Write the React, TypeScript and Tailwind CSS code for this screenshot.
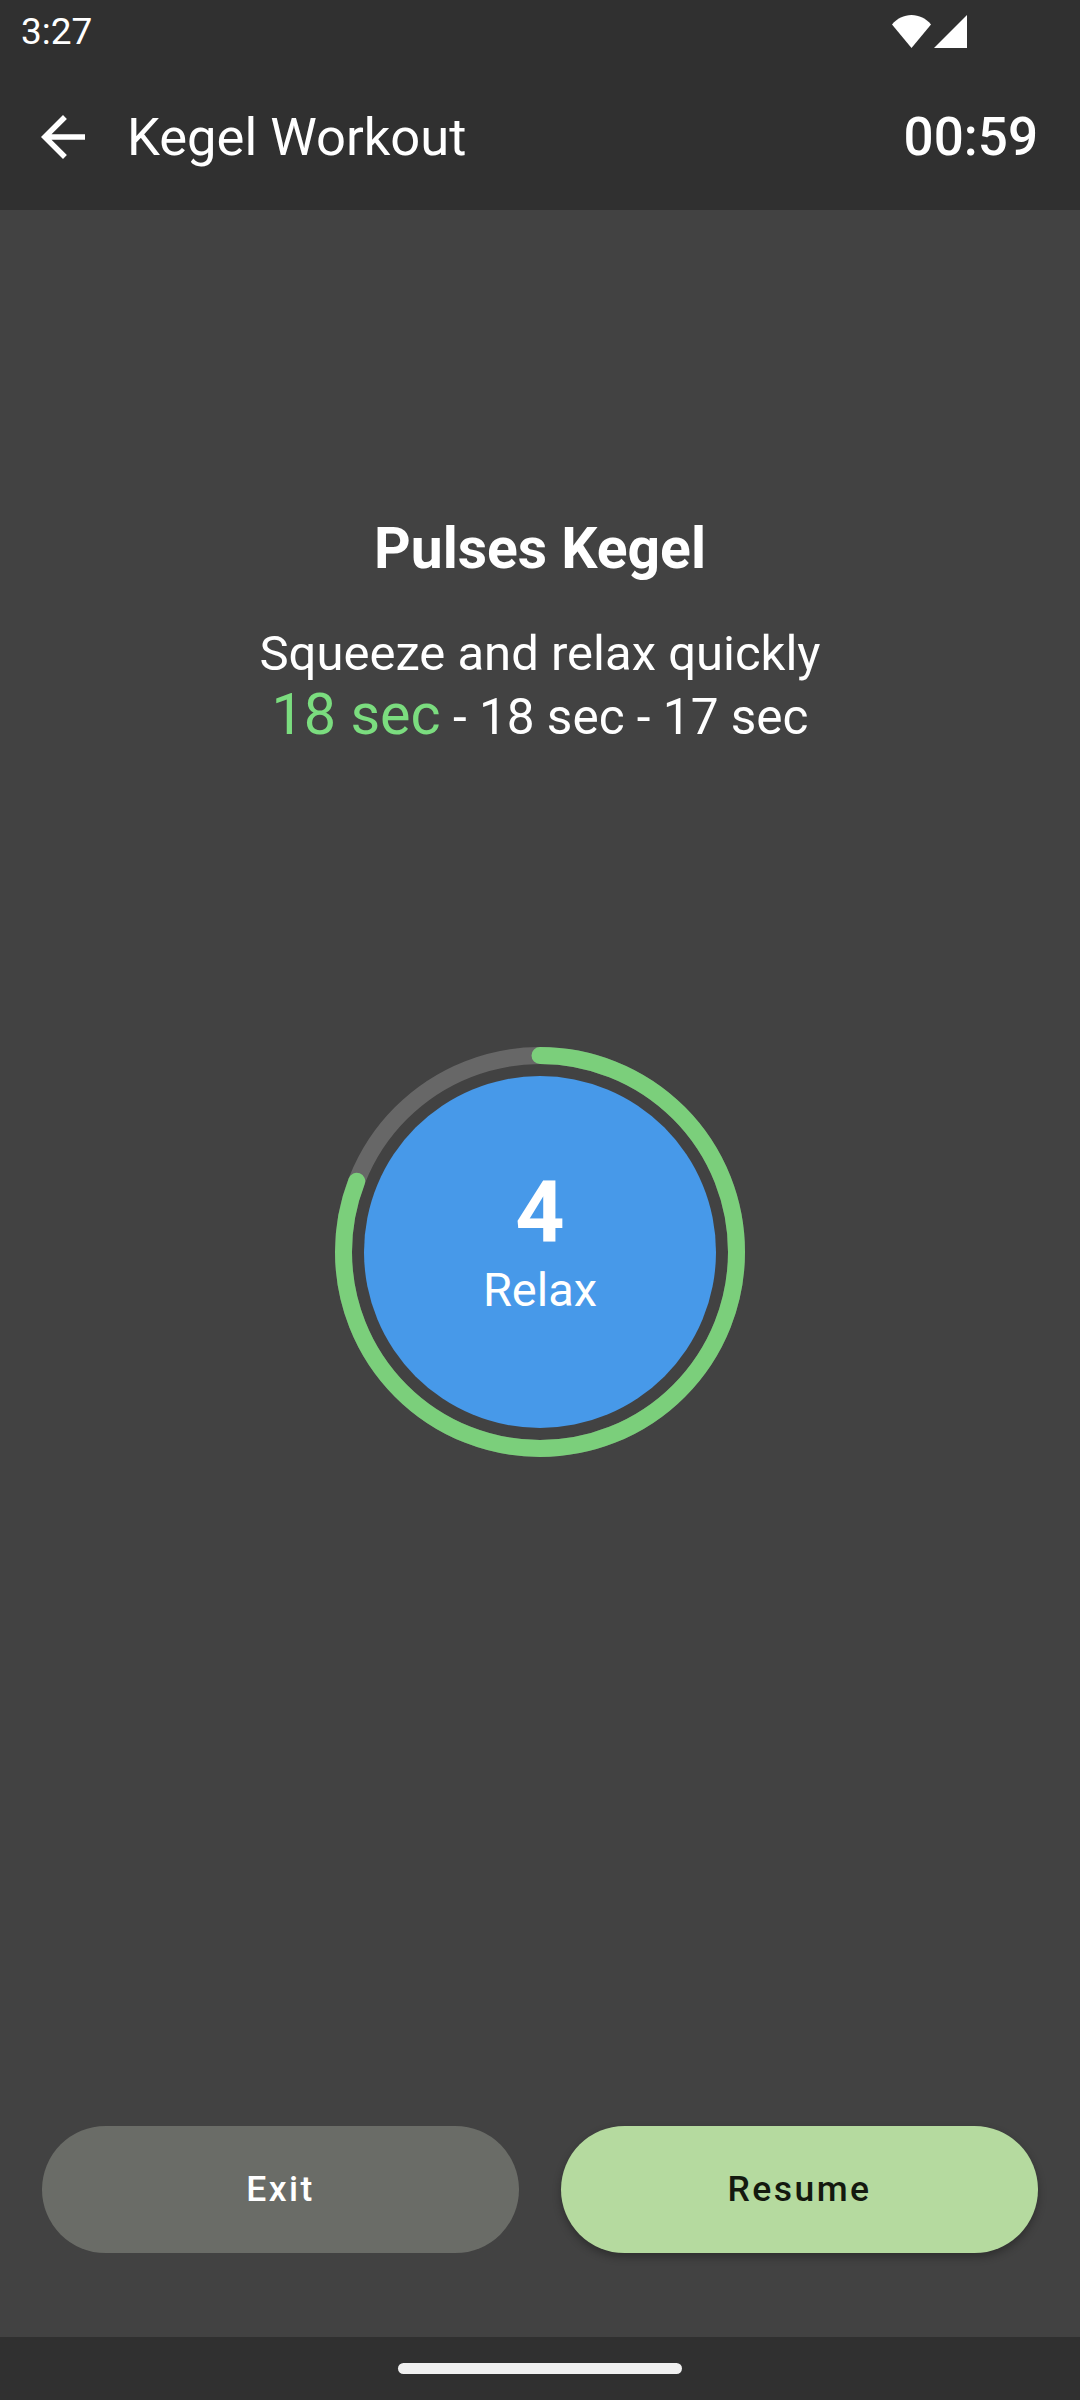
const FONT = "font-['Roboto',sans-serif]";

function WifiIcon() {
  return (
    <svg width="39" height="33" viewBox="0 0 39 33" className="mr-[3px]">
      <path d="M0 9.5C5 3.5 12 0 19.5 0S34 3.5 39 9.5L19.5 33z" fill="#fff" />
    </svg>
  );
}

function SignalIcon() {
  return (
    <svg width="33" height="33" viewBox="0 0 33 33">
      <path d="M33 0v33H0z" fill="#fff" />
    </svg>
  );
}

function ProgressRing() {
  const radius = 196.5;
  const circumference = 2 * Math.PI * radius;
  const progress = 291 / 360;

  return (
    <div className="relative flex h-[410px] w-[410px] items-center justify-center">
      <svg width="410" height="410" viewBox="0 0 410 410" className="absolute inset-0 -rotate-90">
        <circle cx="205" cy="205" r={radius} fill="none" stroke="#676767" strokeWidth="17" />
        <circle
          cx="205"
          cy="205"
          r={radius}
          fill="none"
          stroke="#7BCF7B"
          strokeWidth="17"
          strokeLinecap="round"
          strokeDasharray={`${circumference * progress} ${circumference}`}
        />
      </svg>
      <div className="flex h-[352px] w-[352px] flex-col items-center rounded-full bg-[#4799E9] text-white">
        <span className="mt-[92px] text-[86px] leading-[88px] font-bold">4</span>
        <span className="mt-[8px] text-[47px] leading-[52px]">Relax</span>
      </div>
    </div>
  );
}

export default function App() {
  return (
    <div className={`flex h-[2400px] w-[1080px] flex-col bg-[#424242] text-white ${FONT}`}>
      <header className="h-[210px] bg-[#303030]">
        <div className="flex h-[63px] items-center justify-between pr-[113px] pl-[21px]">
          <span className="text-[37px] leading-[40px]">3:27</span>
          <div className="flex items-center">
            <WifiIcon />
            <SignalIcon />
          </div>
        </div>
        <div className="flex h-[147px] items-center pr-[42px] pl-[30px]">
          <svg width="66" height="66" viewBox="0 0 24 24" fill="#fff">
            <path d="M20 11H7.83l5.59-5.59L12 4l-8 8 8 8 1.41-1.41L7.83 13H20v-2z" />
          </svg>
          <h1 className="ml-[31px] flex-1 text-[52.5px] leading-[60px]">Kegel Workout</h1>
          <span className="text-[53px] leading-[60px] font-medium">00:59</span>
        </div>
      </header>

      <main className="flex flex-1 flex-col items-center pt-[306px]">
        <h2 className="text-[57px] leading-[66px] font-bold">Pulses Kegel</h2>
        <p className="mt-[42px] text-[49px] leading-[60px]">Squeeze and relax quickly</p>
        <p className="text-[49.5px] leading-[62px]">
          <span className="text-[57.5px] text-[#7BDD7F]">18 sec</span> - 18 sec - 17 sec
        </p>
        <div className="mt-[299px]">
          <ProgressRing />
        </div>
        <div className="mt-auto mb-[84px] flex w-full gap-[42px] px-[42px]">
          <button className="h-[127px] flex-1 rounded-full bg-[#6A6C67] text-[35.5px] font-medium tracking-[0.07em] text-white">
            Exit
          </button>
          <button className="h-[127px] flex-1 rounded-full bg-[#B5DA9F] text-[35.5px] font-medium tracking-[0.07em] text-[#14190F] shadow-[0_4px_8px_rgba(0,0,0,0.3)]">
            Resume
          </button>
        </div>
      </main>

      <footer className="flex h-[63px] justify-center bg-[#303030] pt-[26px]">
        <div className="h-[11px] w-[284px] rounded-full bg-[#F0F0F0]" />
      </footer>
    </div>
  );
}
